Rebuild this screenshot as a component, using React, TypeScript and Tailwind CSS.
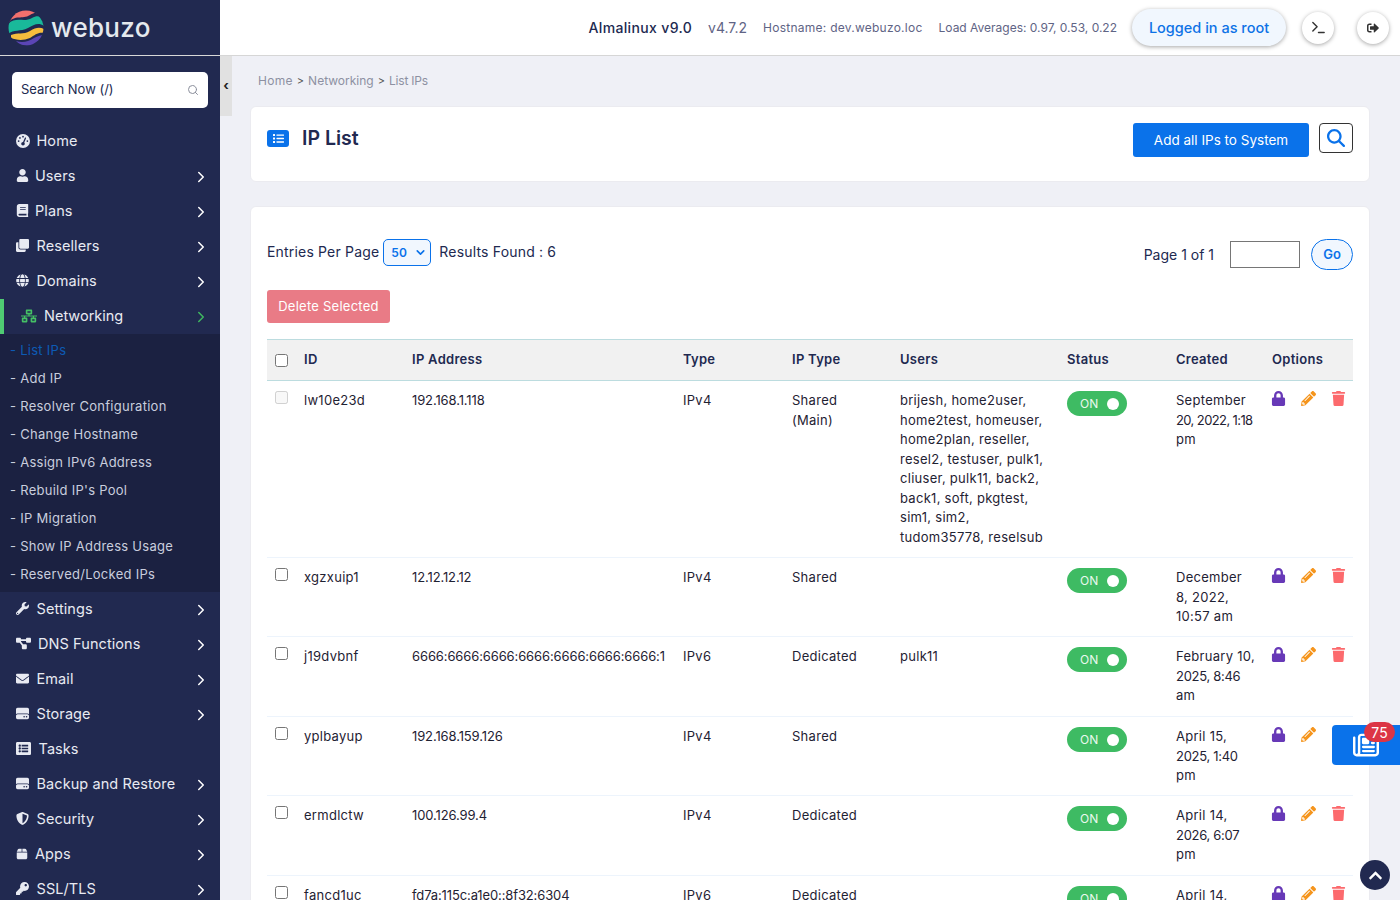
import React from "react";
import { FaUser, FaBook, FaClone, FaGlobe, FaNetworkWired, FaWrench, FaEnvelope, FaListAlt, FaKey, FaLock, FaPencilAlt, FaTrash, FaChevronUp, FaSignOutAlt, FaList } from "react-icons/fa";
import { FaGaugeHigh, FaDiagramProject, FaHardDrive, FaShieldHalved, FaBox, FaRegNewspaper, FaMagnifyingGlass } from "react-icons/fa6";
import { ChevronRight, ChevronDown, Search, Terminal } from "lucide-react";

const font = { fontFamily: "Inter, 'Noto Sans', sans-serif" };

function Logo() {
  return (
    <svg width="36" height="36" viewBox="0 0 36 36" className="shrink-0">
      <defs>
        <clipPath id="ball"><circle cx="18" cy="18" r="17.5" /></clipPath>
      </defs>
      <g clipPath="url(#ball)">
        <path d="M0 13C7 4 14 10 22 5C27 2 30 3 32 5L25 0H8L0 8Z" fill="#f2706d" />
        <path d="M0 14C8 6 16 13 24 8C29 5 33 6 36 10V16C30 12 26 15 20 18C12 22 6 19 0 24Z" fill="#19b99a" />
        <path d="M3 25C10 22 15 25 22 21C28 17 32 17 36 19V23C30 22 27 25 22 28C15 31 8 30 3 28Z" fill="#f6bd3d" />
        <path d="M8 31C14 33 20 32 26 28C30 26 33 25 36 25L30 32C24 37 13 37 8 31Z" fill="#5b45b5" />
      </g>
    </svg>
  );
}

const main1 = [
  { icon: <FaGaugeHigh size={14} />, label: "Home", x: 20.5, arrow: false },
  { icon: <FaUser size={13} />, label: "Users", x: 19, arrow: true },
  { icon: <FaBook size={13} />, label: "Plans", x: 19, arrow: true },
  { icon: <FaClone size={13} />, label: "Resellers", x: 20.5, arrow: true },
  { icon: <FaGlobe size={13} />, label: "Domains", x: 20.5, arrow: true },
];
const main2 = [
  { icon: <FaWrench size={13} />, label: "Settings", x: 20.5, arrow: true },
  { icon: <FaDiagramProject size={15} />, label: "DNS Functions", x: 22, arrow: true },
  { icon: <FaEnvelope size={13} />, label: "Email", x: 20.5, arrow: true },
  { icon: <FaHardDrive size={13} />, label: "Storage", x: 20.5, arrow: true },
  { icon: <FaListAlt size={15} />, label: "Tasks", x: 22.5, arrow: false },
  { icon: <FaHardDrive size={13} />, label: "Backup and Restore", x: 20.5, arrow: true },
  { icon: <FaShieldHalved size={13} />, label: "Security", x: 20.5, arrow: true },
  { icon: <FaBox size={12} />, label: "Apps", x: 19, arrow: true },
  { icon: <FaKey size={13} />, label: "SSL/TLS", x: 20.5, arrow: true },
];
const subs = ["Add IP", "Resolver Configuration", "Change Hostname", "Assign IPv6 Address", "Rebuild IP's Pool", "IP Migration", "Show IP Address Usage", "Reserved/Locked IPs"];

function NavItem({ icon, label, x, arrow }: { icon: React.ReactNode; label: string; x: number; arrow: boolean }) {
  return (
    <div className="flex h-[35px] shrink-0 items-center pr-[10px] pl-4 text-[14.5px] tracking-[0.08px] text-[#e8eaf2]">
      <span className="mb-[2px] flex shrink-0 justify-start" style={{ width: x }}>{icon}</span>
      <span className="mb-[2px] flex-1 whitespace-nowrap">{label}</span>
      {arrow && <ChevronRight size={18} strokeWidth={2} className="text-white" />}
    </div>
  );
}

function Sidebar() {
  return (
    <aside className="flex h-[900px] w-[220px] shrink-0 flex-col overflow-hidden bg-[#212950]">
      <div className="flex h-[56px] shrink-0 items-center gap-[7px] border-b border-[#d8d8d8] pl-2">
        <Logo />
        <span className="text-[26px] font-medium tracking-[0.3px] text-[#e5e9ee]">webuzo</span>
      </div>
      <div className="shrink-0 px-3 pt-4 pb-4">
        <div className="flex h-9 items-center justify-between rounded-[5px] bg-white px-[9px] text-[13px] text-[#212950]">
          <span>Search Now (/)</span>
          <Search size={12} strokeWidth={2} className="text-[#8b8f9c]" />
        </div>
      </div>
      {main1.map((m) => <NavItem key={m.label} {...m} />)}
      <div className="flex h-[35px] shrink-0 items-center border-l-[4px] border-[#4fcb73] pr-[10px] pl-[17px] text-[14.5px] text-[#e8eaf2]">
        <span className="mb-[2px] w-[23px] shrink-0 text-[#45c065]"><FaNetworkWired size={16} /></span>
        <span className="mb-[2px] flex-1">Networking</span>
        <ChevronRight size={18} strokeWidth={2} className="text-[#3fb860]" />
      </div>
      <div className="flex h-[258px] shrink-0 flex-col bg-[#1b2141] pt-[3px] pl-[10px] text-[13px] tracking-[0.27px] text-[#c9cede]">
        <div className="flex h-7 shrink-0 items-center text-[#0d5bb5]">- List IPs</div>
        {subs.map((s) => <div key={s} className="flex h-7 shrink-0 items-center">- {s}</div>)}
      </div>
      {main2.map((m) => <NavItem key={m.label} {...m} />)}
    </aside>
  );
}

function Header() {
  return (
    <header className="flex h-[56px] shrink-0 items-center justify-end border-b border-[#d6d6d6] bg-white pr-[11px]">
      <span className="text-[14px] font-medium tracking-[0.35px] text-[#212950]">Almalinux v9.0</span>
      <span className="ml-4 text-[14px] text-[#5f6485]">v4.7.2</span>
      <span className="ml-4 text-[12px] tracking-[0.25px] text-[#5f6485]">Hostname: dev.webuzo.loc</span>
      <span className="ml-4 text-[12px] text-[#5f6485]">Load Averages: 0.97, 0.53, 0.22</span>
      <span className="ml-[15px] flex h-[37px] w-[154px] items-center justify-center rounded-full bg-[#f1f7fe] text-[14.5px] font-medium text-[#0d72e6] shadow-[0_1px_4px_rgba(0,0,0,0.35)]">Logged in as root</span>
      <span className="ml-4 flex h-8 w-8 items-center justify-center rounded-full bg-white shadow-[0_1px_4px_rgba(0,0,0,0.35)]">
        <Terminal size={17} strokeWidth={2} className="text-[#333]" />
      </span>
      <span className="ml-[23px] flex h-8 w-8 items-center justify-center rounded-full bg-white shadow-[0_1px_4px_rgba(0,0,0,0.35)]">
        <FaSignOutAlt size={12} className="text-[#333]" />
      </span>
    </header>
  );
}

type Row = { id: string; ip: string; type: string; ipType: string[]; users: string[]; created: string[]; h: string; disabled?: boolean };
const rows: Row[] = [
  { id: "lw10e23d", ip: "192.168.1.118", type: "IPv4", ipType: ["Shared", "(Main)"], users: ["brijesh, home2user,", "home2test, homeuser,", "home2plan, reseller,", "resel2, testuser, pulk1,", "cliuser, pulk11, back2,", "back1, soft, pkgtest,", "sim1, sim2,", "tudom35778, reselsub"], created: ["September", "20, 2022, 1:18", "pm"], h: "h-[177px]", disabled: true },
  { id: "xgzxuip1", ip: "12.12.12.12", type: "IPv4", ipType: ["Shared"], users: [], created: ["December", "8, 2022,", "10:57 am"], h: "h-[79px]" },
  { id: "j19dvbnf", ip: "6666:6666:6666:6666:6666:6666:6666:1", type: "IPv6", ipType: ["Dedicated"], users: ["pulk11"], created: ["February 10,", "2025, 8:46", "am"], h: "h-[80px]" },
  { id: "yplbayup", ip: "192.168.159.126", type: "IPv4", ipType: ["Shared"], users: [], created: ["April 15,", "2025, 1:40", "pm"], h: "h-[79px]" },
  { id: "ermdlctw", ip: "100.126.99.4", type: "IPv4", ipType: ["Dedicated"], users: [], created: ["April 14,", "2026, 6:07", "pm"], h: "h-[80px]" },
  { id: "fancd1uc", ip: "fd7a:115c:a1e0::8f32:6304", type: "IPv6", ipType: ["Dedicated"], users: [], created: ["April 14,", "2026, 6:07", "pm"], h: "h-[79px]" },
];

function trackFor(t: string) {
  if (t.startsWith("20, 2022")) return "tracking-[-0.6px]";
  if (/^\d{4},/.test(t)) return "tracking-[-0.3px]";
  return "";
}

function Lines({ l }: { l: string[] }) {
  return <>{l.map((t) => <div key={t} className={`whitespace-nowrap ${trackFor(t)}`}>{t}</div>)}</>;
}

function Table() {
  return (
    <table className="w-[1086px] table-fixed border-collapse text-[13px] leading-[19.5px] tracking-[0.28px] text-[#1f2233]">
      <colgroup>
        <col className="w-[29px]" /><col className="w-[108px]" /><col className="w-[271px]" /><col className="w-[109px]" /><col className="w-[108px]" /><col className="w-[167px]" /><col className="w-[109px]" /><col className="w-[96px]" /><col className="w-[89px]" />
      </colgroup>
      <thead>
        <tr className="h-[41px] border-y border-[#bcdcdf] bg-[#f1f1f1] text-left text-[13px] text-[#212950]">
          <th className="pl-2"><input type="checkbox" className="block h-[13px] w-[13px]" readOnly /></th>
          <th className="pl-2 font-semibold">ID</th>
          <th className="pl-2 font-semibold">IP Address</th>
          <th className="pl-2 font-semibold">Type</th>
          <th className="pl-2 font-semibold">IP Type</th>
          <th className="pl-2 font-semibold">Users</th>
          <th className="pl-2 font-semibold">Status</th>
          <th className="pl-2 font-semibold">Created</th>
          <th className="pl-2 font-semibold">Options</th>
        </tr>
      </thead>
      <tbody>
        {rows.map((r) => (
          <tr key={r.id} className={`${r.h} border-b border-[#edf4fc] align-top`}>
            <td className="pt-[11px] pl-2"><input type="checkbox" disabled={r.disabled} className="mt-[-1px] block h-[13px] w-[13px]" readOnly /></td>
            <td className="pt-[10px] pl-2">{r.id}</td>
            <td className="pt-[10px] pl-2 tracking-[-0.12px] whitespace-nowrap">{r.ip}</td>
            <td className="pt-[10px] pl-2">{r.type}</td>
            <td className="pt-[10px] pl-2"><Lines l={r.ipType} /></td>
            <td className="pt-[10px] pl-2"><Lines l={r.users} /></td>
            <td className="pt-[10px] pl-2">
              <div className="flex h-[25px] w-[60px] items-center justify-between rounded-full bg-[#3ebb63] pr-[8px] pl-[13px] text-[12px] tracking-normal text-[#e9f8ee]">
                <span>ON</span><span className="h-3 w-3 rounded-full bg-white" />
              </div>
            </td>
            <td className="pt-[10px] pl-2"><Lines l={r.created} /></td>
            <td className="pt-[10px] pl-2">
              <div className="flex h-[15px] items-center">
                <FaLock size={15} className="ml-[-1px] text-[#6739b7]" />
                <FaPencilAlt size={15} className="ml-[15px] text-[#f5951d]" />
                <FaTrash size={15} className="ml-[15px] text-[#fc6a6d]" />
              </div>
            </td>
          </tr>
        ))}
      </tbody>
    </table>
  );
}

export default function App() {
  return (
    <div className="relative flex h-[900px] w-[1400px] overflow-hidden bg-[#eff0f6]" style={font}>
      <Sidebar />
      <div className="relative flex min-w-0 flex-1 flex-col">
        <Header />
        <div className="absolute top-[56px] left-0 flex h-[60px] w-3 items-center justify-center bg-[#e1e1e1] text-[13px] font-bold text-[#222]">‹</div>
        <main className="flex min-h-0 flex-1 flex-col overflow-hidden px-[30px]">
          <div className="flex h-[50px] shrink-0 items-center gap-1 pl-2 text-[12px] text-[#8d90a2]">
            <span className="tracking-[0.3px]">Home</span><span className="text-[11px] text-[#555]">&gt;</span><span>Networking</span><span className="text-[11px] text-[#555]">&gt;</span><span className="tracking-[-0.2px]">List IPs</span>
          </div>
          <section className="flex h-[76px] shrink-0 items-start justify-between rounded-[6px] border border-[#ebebf0] bg-white pt-4 pr-4 pl-4">
            <div className="flex items-center pt-[1px]">
              <span className="flex h-[17px] w-[22px] items-center justify-center rounded-[3px] bg-[#0a72ea] text-white"><FaList size={11} /></span>
              <h1 className="ml-[13px] text-[19.5px] leading-[28px] font-semibold text-[#212950]">IP List</h1>
            </div>
            <div className="flex items-start gap-[10px]">
              <button className="h-[34px] w-[176px] rounded-[3px] bg-[#0a72ea] text-[13.5px] text-white">Add all IPs to System</button>
              <span className="flex h-[30px] w-[34px] items-center justify-center rounded-[4px] border border-[#333] text-[#0a72ea]"><FaMagnifyingGlass size={18} /></span>
            </div>
          </section>
          <section className="mt-[24px] flex-1 rounded-[6px] border border-[#ebebf0] bg-white px-4">
            <div className="flex h-[83px] items-start justify-between pt-[32px]">
              <div className="flex items-center text-[14px] tracking-[0.18px] text-[#212950]">
                <span className="mb-[2px]">Entries Per Page</span>
                <span className="ml-[4px] flex h-[27px] w-[48px] items-center justify-between rounded-[5px] border border-[#0a72ea] bg-[#f1f7fe] pr-[3px] pl-[7px] text-[12px] font-semibold text-[#0a72ea]">50<ChevronDown size={13} strokeWidth={3} /></span>
                <span className="mb-[2px] ml-2">Results Found : 6</span>
              </div>
              <div className="flex items-center text-[14px] text-[#212950]">
                <span>Page 1 of 1</span>
                <span className="ml-4 h-[27px] w-[70px] border border-[#767676] bg-white" />
                <span className="ml-[11px] flex h-[31px] w-[42px] items-center justify-center rounded-full border border-[#0a72ea] bg-[#f1f7fe] text-[13px] font-semibold text-[#0a72ea]">Go</span>
              </div>
            </div>
            <button className="block h-[33px] w-[123px] rounded-[3px] bg-[#e97b86] text-[13px] tracking-[0.25px] text-white">Delete Selected</button>
            <div className="mt-[16px]"><Table /></div>
          </section>
        </main>
      </div>
      <div className="absolute top-[725px] right-0 flex h-10 w-[68px] items-center justify-center rounded-l-[4px] bg-[#0a72ea] text-white">
        <FaRegNewspaper size={26} />
        <span className="absolute top-[-3px] left-[32px] flex h-5 w-[31px] items-center justify-center rounded-full bg-[#dc3545] text-[14px] text-white">75</span>
      </div>
      <div className="absolute top-[860px] left-[1360px] flex h-[30px] w-[30px] items-center justify-center rounded-full bg-[#212950] text-white"><FaChevronUp size={15} /></div>
    </div>
  );
}
